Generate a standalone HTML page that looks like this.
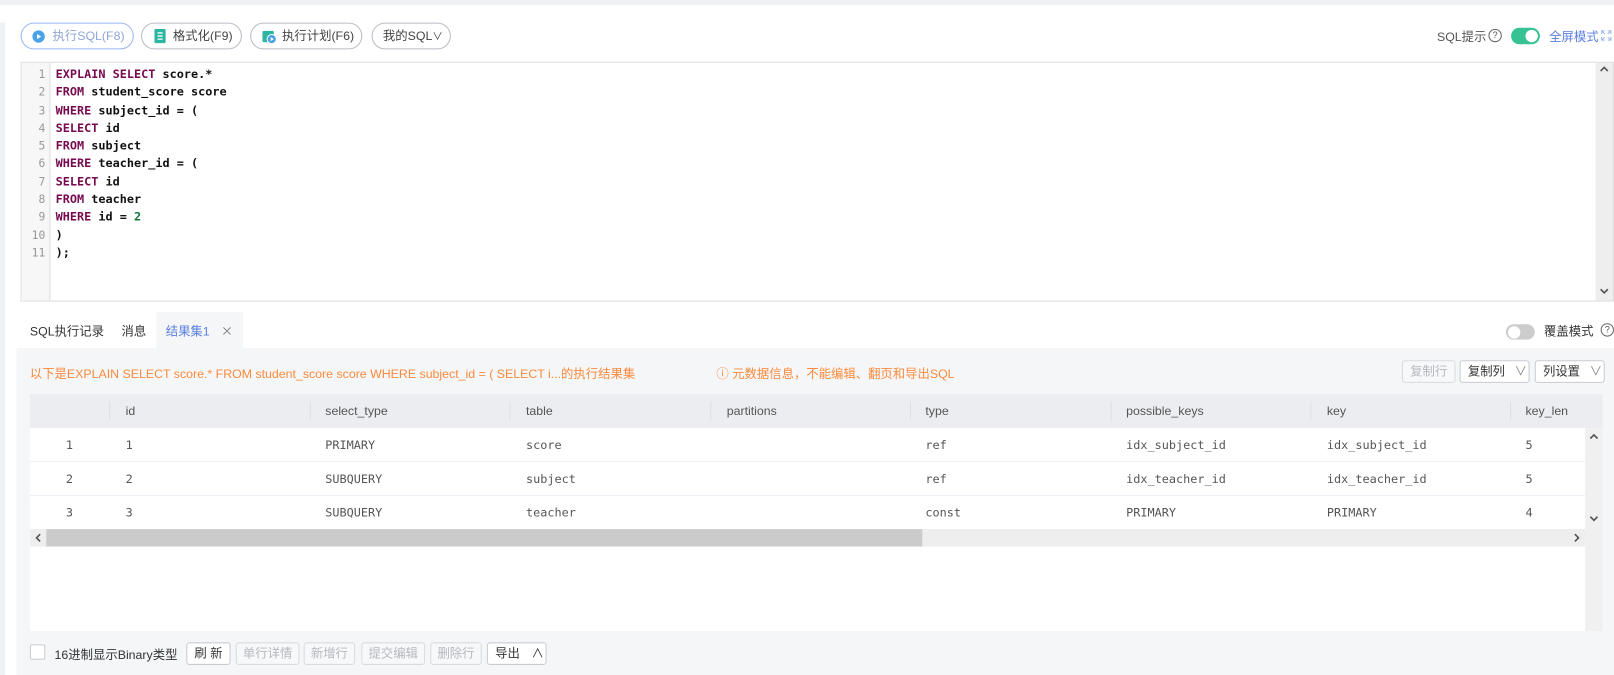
<!DOCTYPE html>
<html><head><meta charset="utf-8"><style>
*{box-sizing:border-box;margin:0;padding:0}
body{width:1614px;height:675px;background:#fff;overflow:hidden;margin:0}
#w{position:absolute;left:0;top:0;width:1568px;height:656px;transform:scale(1.02934);transform-origin:0 0;font-family:"Liberation Sans","Noto Sans CJK SC",sans-serif;font-size:12px;color:#333;overflow:hidden}
.abs{position:absolute}
.btn{position:absolute;top:22px;height:26px;border:1px solid #b8bcc4;border-radius:13px;font-size:12px;line-height:24px;color:#444;padding-left:12px;white-space:nowrap}
.mono{font-family:"DejaVu Sans Mono","Liberation Mono",monospace}
.code div{height:17.3px;line-height:17.3px;font-size:11.5px;color:#111;font-weight:bold}
.kw{color:#770a4e}
.gut div{height:17.3px;line-height:17.3px;font-size:11px;color:#999;text-align:right;padding-right:4px}
.th{position:absolute;top:0;height:32px;line-height:32px;color:#555;font-size:12px}
.sep{position:absolute;top:7px;width:1px;height:18px;background:#dcdfe6}
.row{position:absolute;left:0;width:1511px;height:33px;background:#fff;border-bottom:1px solid #ebeef5}
.td{position:absolute;top:0;line-height:33px;font-size:11.5px;color:#555}
.sb{position:absolute;height:22px;border:1px solid #c8cbd0;border-radius:3px;background:#fff;font-size:12px;line-height:20px;text-align:center;color:#333}
.dis{color:#b5b8bd;border-color:#d8dbe0;background:#f7f8fa}
</style></head><body><div id="w">
<div class="abs" style="left:0;top:0;width:1568px;height:5px;background:#f0f1f4"></div>
<div class="abs" style="left:0;top:22px;width:5px;height:640px;background:#f0f1f4"></div>

<div class="btn" style="left:20px;width:110px;border-color:#9db6f0;color:#8fa6d8;padding-left:30px">执行SQL(F8)
<svg class="abs" style="left:10px;top:6px" width="13" height="13" viewBox="0 0 13 13"><circle cx="6.5" cy="6.5" r="6" fill="#4aa3e8"/><path d="M5 4v5l4-2.5z" fill="#fff"/></svg></div>
<div class="btn" style="left:137px;width:98px;padding-left:30px">格式化(F9)
<svg class="abs" style="left:12px;top:5px" width="11" height="14" viewBox="0 0 11 14"><rect width="11" height="14" rx="1.5" fill="#2cb5a0"/><path d="M3 4h5M3 7h5M3 10h5" stroke="#fff" stroke-width="1.3"/></svg></div>
<div class="btn" style="left:243px;width:109px;padding-left:30px">执行计划(F6)
<svg class="abs" style="left:10px;top:5px" width="15" height="15" viewBox="0 0 15 15"><rect x="1" y="2" width="11" height="11" rx="1.5" fill="#2cb5a0"/><circle cx="10" cy="10" r="4.5" fill="#4aa3e8" stroke="#fff"/><path d="M9 8v4l3-2z" fill="#fff"/></svg></div>
<div class="btn" style="left:361px;width:77px;padding-left:10px">我的SQL<span style="font-size:10px">∨</span></div>

<div class="abs" style="left:1396px;top:27px;font-size:12px;color:#555">SQL提示</div>
<div class="abs" style="left:1446px;top:28px;width:13px;height:13px;border:1px solid #666;border-radius:50%;font-size:9px;line-height:11px;text-align:center;color:#555">?</div>
<div class="abs" style="left:1468px;top:27px;width:28px;height:16px;border-radius:8px;background:#36c293"><div class="abs" style="left:14px;top:2px;width:12px;height:12px;border-radius:50%;background:#fff"></div></div>
<div class="abs" style="left:1505px;top:27px;font-size:12px;color:#5b7fe0">全屏模式</div>
<svg class="abs" style="left:1555px;top:29px" width="11" height="11" viewBox="0 0 11 11" fill="none" stroke="#9db6f0" stroke-width="1"><path d="M1 4V1h3M7 1h3v3M10 7v3H7M4 10H1V7M1 1l3 3M10 1L7 4M10 10L7 7M1 10l3-3"/></svg>

<div class="abs" style="left:20px;top:60px;width:1548px;height:233px;border:1px solid #ddd"></div>
<div class="abs gut mono" style="left:21px;top:64px;width:28px;height:228px;background:#f7f7f7;border-right:1px solid #ddd">
<div>1</div><div>2</div><div>3</div><div>4</div><div>5</div><div>6</div><div>7</div><div>8</div><div>9</div><div>10</div><div>11</div></div>
<div class="abs" style="left:21px;top:61px;width:28px;height:4px;background:#f7f7f7;border-right:1px solid #ddd"></div>
<div class="abs code mono" style="left:54px;top:64px">
<div><span class="kw">EXPLAIN SELECT</span> score.*</div>
<div><span class="kw">FROM</span> student_score score</div>
<div><span class="kw">WHERE</span> subject_id = (</div>
<div><span class="kw">SELECT</span> id</div>
<div><span class="kw">FROM</span> subject</div>
<div><span class="kw">WHERE</span> teacher_id = (</div>
<div><span class="kw">SELECT</span> id</div>
<div><span class="kw">FROM</span> teacher</div>
<div><span class="kw">WHERE</span> id = <span style="color:#11773a">2</span></div>
<div>)</div>
<div>);</div></div>
<div class="abs" style="left:1550px;top:61px;width:17px;height:231px;background:#eee"></div>
<svg class="abs" style="left:1554px;top:64px" width="9" height="6" viewBox="0 0 9 6"><path d="M1 5l3.5-3.5L8 5" stroke="#555" stroke-width="1.6" fill="none"/></svg>
<svg class="abs" style="left:1554px;top:280px" width="9" height="6" viewBox="0 0 9 6"><path d="M1 1l3.5 3.5L8 1" stroke="#555" stroke-width="1.6" fill="none"/></svg>

<div class="abs" style="left:29px;top:313px;font-size:12px;color:#333">SQL执行记录</div>
<div class="abs" style="left:118px;top:313px;font-size:12px;color:#333">消息</div>
<div class="abs" style="left:152px;top:303px;width:84px;height:36px;background:#f5f6f8"></div>
<div class="abs" style="left:161px;top:313px;font-size:12px;color:#5b7fe0">结果集1</div>
<svg class="abs" style="left:216px;top:317px" width="9" height="9" viewBox="0 0 9 9"><path d="M1 1l7 7M8 1L1 8" stroke="#888" stroke-width="1"/></svg>
<div class="abs" style="left:1463px;top:315px;width:28px;height:15px;border-radius:8px;background:#ccc"><div class="abs" style="left:2px;top:1.5px;width:12px;height:12px;border-radius:50%;background:#fff"></div></div>
<div class="abs" style="left:1500px;top:313px;font-size:12px;color:#333">覆盖模式</div>
<div class="abs" style="left:1555px;top:314px;width:13px;height:13px;border:1px solid #666;border-radius:50%;font-size:9px;line-height:11px;text-align:center;color:#555">?</div>

<div class="abs" style="left:16px;top:338px;width:1552px;height:318px;background:#f5f6f8"></div>
<div class="abs" style="left:29px;top:354px;font-size:12px;color:#fb8a3c">以下是EXPLAIN SELECT score.* FROM student_score score WHERE subject_id = ( SELECT i...的执行结果集</div>
<div class="abs" style="left:696px;top:354px;font-size:12px;color:#fb8a3c">ⓘ 元数据信息，不能编辑、翻页和导出SQL</div>
<div class="sb dis" style="left:1362px;top:350px;width:52px">复制行</div>
<div class="sb" style="left:1418px;top:350px;width:68px;text-align:left;padding-left:7px">复制列 <span style="color:#888;margin-left:6px">∨</span></div>
<div class="sb" style="left:1491px;top:350px;width:68px;text-align:left;padding-left:7px">列设置 <span style="color:#888;margin-left:6px">∨</span></div>

<div class="abs" style="left:29px;top:383px;width:1528px;height:230px;background:#fff">
 <div class="abs" style="left:0;top:0;width:1528px;height:33px;background:#ebedf1"></div>
 <div class="sep" style="left:77px"></div><div class="sep" style="left:272px"></div><div class="sep" style="left:466px"></div><div class="sep" style="left:661px"></div><div class="sep" style="left:855px"></div><div class="sep" style="left:1050px"></div><div class="sep" style="left:1244px"></div><div class="sep" style="left:1438px"></div>
 <div class="th" style="left:93px">id</div><div class="th" style="left:287px">select_type</div><div class="th" style="left:482px">table</div><div class="th" style="left:677px">partitions</div><div class="th" style="left:870px">type</div><div class="th" style="left:1065px">possible_keys</div><div class="th" style="left:1260px">key</div><div class="th" style="left:1453px">key_len</div>
 <div class="row mono" style="top:33px"><div class="td" style="left:35px">1</div><div class="td" style="left:93px">1</div><div class="td" style="left:287px">PRIMARY</div><div class="td" style="left:482px">score</div><div class="td" style="left:870px">ref</div><div class="td" style="left:1065px">idx_subject_id</div><div class="td" style="left:1260px">idx_subject_id</div><div class="td" style="left:1453px">5</div></div>
 <div class="row mono" style="top:66px"><div class="td" style="left:35px">2</div><div class="td" style="left:93px">2</div><div class="td" style="left:287px">SUBQUERY</div><div class="td" style="left:482px">subject</div><div class="td" style="left:870px">ref</div><div class="td" style="left:1065px">idx_teacher_id</div><div class="td" style="left:1260px">idx_teacher_id</div><div class="td" style="left:1453px">5</div></div>
 <div class="row mono" style="top:99px;border:none"><div class="td" style="left:35px">3</div><div class="td" style="left:93px">3</div><div class="td" style="left:287px">SUBQUERY</div><div class="td" style="left:482px">teacher</div><div class="td" style="left:870px">const</div><div class="td" style="left:1065px">PRIMARY</div><div class="td" style="left:1260px">PRIMARY</div><div class="td" style="left:1453px">4</div></div>
 <div class="abs" style="left:0;top:131px;width:1511px;height:17px;background:#eee"></div>
 <div class="abs" style="left:16px;top:131px;width:851px;height:17px;background:#cbcbcb"></div>
 <svg class="abs" style="left:5px;top:135px" width="6" height="9" viewBox="0 0 6 9"><path d="M5 1L1.5 4.5 5 8" stroke="#555" stroke-width="1.6" fill="none"/></svg>
 <svg class="abs" style="left:1500px;top:135px" width="6" height="9" viewBox="0 0 6 9"><path d="M1 1l3.5 3.5L1 8" stroke="#555" stroke-width="1.6" fill="none"/></svg>
 <div class="abs" style="left:1511px;top:33px;width:17px;height:197px;background:#f0f0f0"></div>
 <svg class="abs" style="left:1515px;top:38px" width="9" height="6" viewBox="0 0 9 6"><path d="M1 5l3.5-3.5L8 5" stroke="#555" stroke-width="1.6" fill="none"/></svg>
 <svg class="abs" style="left:1515px;top:118px" width="9" height="6" viewBox="0 0 9 6"><path d="M1 1l3.5 3.5L8 1" stroke="#555" stroke-width="1.6" fill="none"/></svg>
</div>

<div class="abs" style="left:29px;top:626px;width:15px;height:15px;border:1px solid #c8cbd0;border-radius:2px;background:#fff"></div>
<div class="abs" style="left:53px;top:627px;font-size:12px;color:#333">16进制显示Binary类型</div>
<div class="sb" style="left:181px;top:624px;width:43px">刷 新</div>
<div class="sb dis" style="left:229px;top:624px;width:62px">单行详情</div>
<div class="sb dis" style="left:295px;top:624px;width:50px">新增行</div>
<div class="sb dis" style="left:351px;top:624px;width:62px">提交编辑</div>
<div class="sb dis" style="left:418px;top:624px;width:50px">删除行</div>
<div class="sb" style="left:473px;top:624px;width:58px;text-align:left;padding-left:7px">导出 <span style="margin-left:8px">∧</span></div>
</div></body></html>
